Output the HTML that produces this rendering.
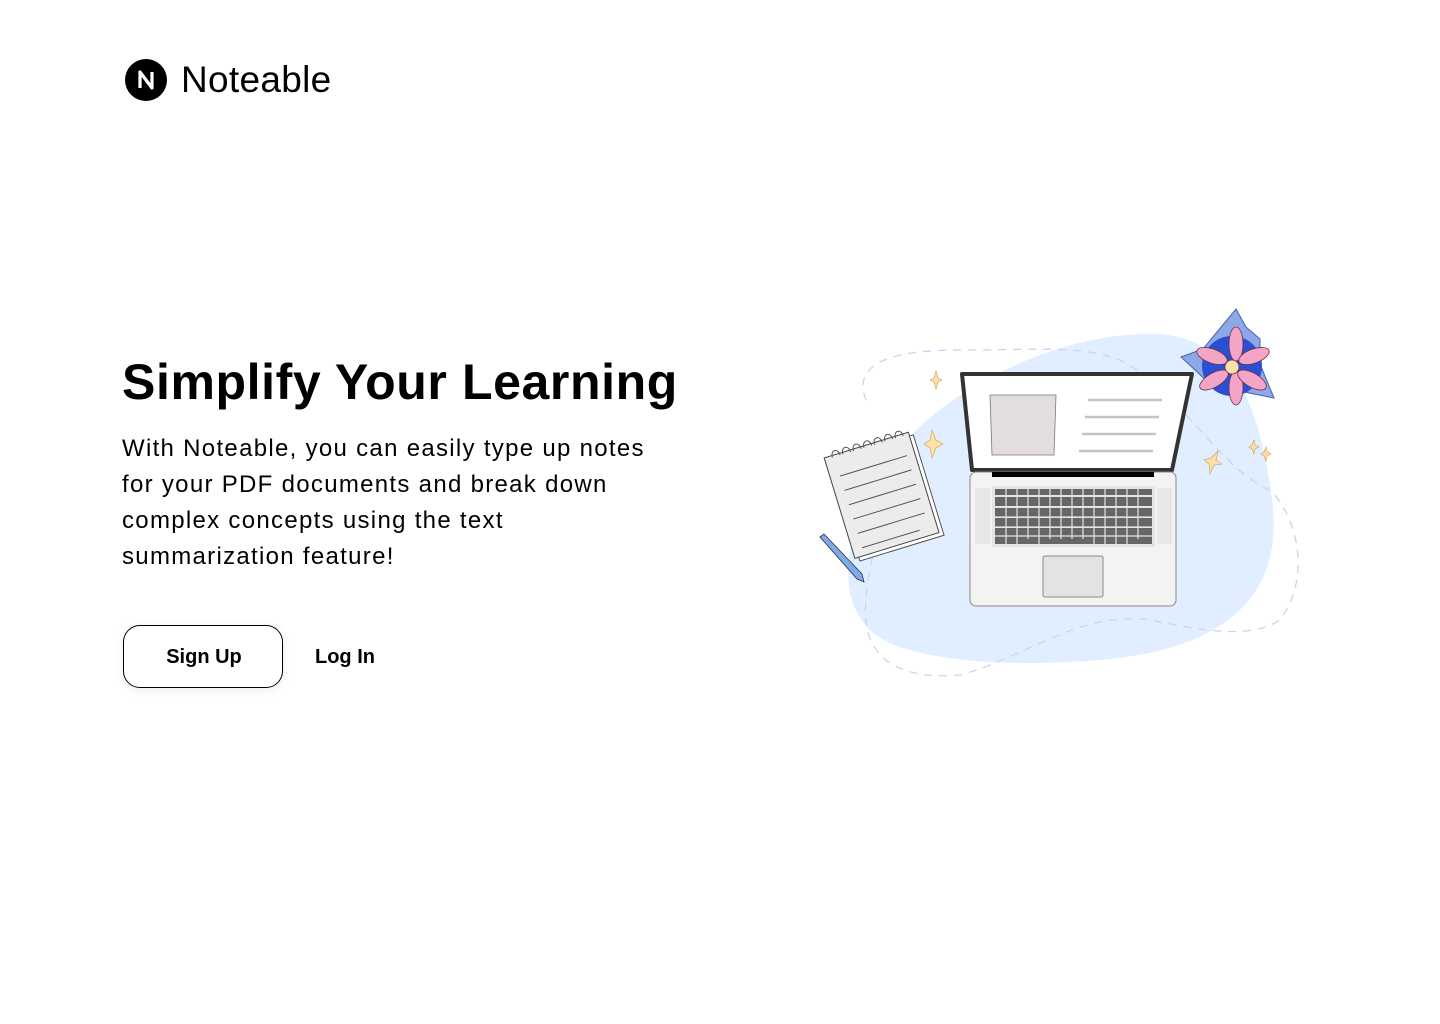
<!DOCTYPE html>
<html><head><meta charset="utf-8"><style>
html,body{margin:0;padding:0;background:#fff;width:1440px;height:1024px;overflow:hidden;font-family:"Liberation Sans",sans-serif;color:#000}
.logo{position:absolute;left:125px;top:59px;display:flex;align-items:center}
.logo .c{width:42px;height:42px;border-radius:50%;background:#000;position:relative}
.logo span{font-size:37px;margin-left:14px;letter-spacing:0.3px}
h1{position:absolute;left:122px;top:353px;margin:0;font-size:50px;font-weight:bold;letter-spacing:0.6px;white-space:nowrap}
p{position:absolute;left:122px;top:431px;margin:0;font-size:24px;line-height:36px;white-space:nowrap;letter-spacing:1.3px}
.btn{position:absolute;left:123px;top:625px;width:160px;height:63px;border:1px solid #000;border-radius:17px;box-shadow:0 2px 10px rgba(0,0,0,.08);font-weight:bold;font-size:20px;display:flex;align-items:center;justify-content:center;box-sizing:border-box;padding-left:2px;padding-top:2px}
.login{position:absolute;left:315px;top:646px;font-weight:bold;font-size:20px}
svg.il{position:absolute;left:0;top:0}
</style></head><body>
<div class="logo"><div class="c"><svg width="42" height="42" viewBox="0 0 42 42"><path d="M15 29V13l12 16V13" fill="none" stroke="#fff" stroke-width="3.2" stroke-linejoin="round"/></svg></div><span>Noteable</span></div>
<h1>Simplify Your Learning</h1>
<p>With Noteable, you can easily type up notes<br>for your PDF documents and break down<br>complex concepts using the text<br>summarization feature!</p>
<div class="btn">Sign Up</div>
<div class="login">Log In</div>
<svg class="il" width="1440" height="1024" viewBox="0 0 1440 1024">
<path d="M1160 334C1240 340 1262 420 1272 500C1285 600 1220 650 1100 660C1000 668 900 660 870 630C830 590 850 520 890 460C940 390 1060 330 1160 334Z" fill="#e1eeff"/>
<path d="M866 400C850 360 900 350 960 350C1040 350 1080 345 1120 360C1180 390 1220 470 1270 490C1300 520 1310 580 1280 620C1250 640 1200 630 1150 620C1080 610 1020 660 960 675C900 680 860 660 866 600C868 560 880 540 880 520" fill="none" stroke="#c9d4f2" stroke-width="1.3" stroke-dasharray="8 7"/>
<g fill="#fde0a8" stroke="#c8a060" stroke-width=".6">
<path d="M936 371l2 7 4 2-4 2-2 7-2-7-4-2 4-2z"/>
<path d="M932 430l4 10 7 4-7 4-4 10-2-10-6-4 6-4z"/>
<path d="M1218 451l-2 9 6 4-8 1-4 9-1-10-5-4 7-2z"/>
<path d="M1254 440l1 5 4 2-4 2-1 5-2-5-3-2 3-2z"/>
<path d="M1266 447l1 5 4 2-4 2-1 5-2-5-3-2 3-2z"/>
</g>
<path d="M1236 309l10 18 14 12 0 25 14 34-25-5-40-10-28-26 22-8z" fill="#8da8e6" stroke="#4a5fb0" stroke-width="1"/>
<circle cx="1232" cy="366" r="30" fill="#2a4fd0"/>
<g fill="#f4a5c6" stroke="#6a3050" stroke-width=".8">
<ellipse cx="1236" cy="344" rx="7" ry="17"/><ellipse cx="1236" cy="388" rx="7" ry="17"/>
<ellipse cx="1254" cy="356" rx="7" ry="16" transform="rotate(70 1254 356)"/>
<ellipse cx="1252" cy="380" rx="7" ry="16" transform="rotate(-60 1252 380)"/>
<ellipse cx="1212" cy="356" rx="7" ry="16" transform="rotate(-70 1212 356)"/>
<ellipse cx="1214" cy="380" rx="7" ry="16" transform="rotate(60 1214 380)"/>
</g>
<circle cx="1232" cy="367" r="7" fill="#fde0a8" stroke="#6a3050" stroke-width=".8"/>
<g transform="rotate(-17 880 490)">
<rect x="840" y="447" width="88" height="105" fill="#fff" stroke="#555" stroke-width="1"/>
<rect x="836" y="443" width="88" height="105" fill="#ececec" stroke="#444" stroke-width="1"/>
<g stroke="#555" stroke-width="1" fill="none">
<path d="M846 465h70M846 480h70M846 495h70M846 510h70M846 525h70M846 540h60"/>
<path d="M844 445c0-8 8-8 8 0M855 445c0-8 8-8 8 0M866 445c0-8 8-8 8 0M877 445c0-8 8-8 8 0M888 445c0-8 8-8 8 0M899 445c0-8 8-8 8 0M910 445c0-8 8-8 8 0"/>
</g></g>
<path d="M820 537l4-3 38 40 2 8-7-3z" fill="#7fa9ef" stroke="#333" stroke-width=".8"/>
<path d="M962 374h230l-20 96h-200z" fill="#fff" stroke="#333" stroke-width="4" stroke-linejoin="round"/>
<path d="M990 395h66l-2 60h-62z" fill="#e3dddf" stroke="#777" stroke-width=".8"/>
<g stroke="#c4c4c4" stroke-width="2.4"><path d="M1088 400h74M1085 417h74M1082 434h74M1079 451h74"/></g>
<rect x="970" y="472" width="206" height="134" rx="6" fill="#f3f3f2" stroke="#888" stroke-width="1"/>
<rect x="992" y="472" width="162" height="5" fill="#000"/>
<rect x="975" y="488" width="15" height="56" fill="#e8e8e8"/><rect x="1157" y="488" width="15" height="56" fill="#e8e8e8"/>
<rect x="992" y="486" width="163" height="61" fill="#e4e4e4"/>
<g fill="#666">
<rect x="995" y="489" width="157" height="6"/>
<rect x="995" y="497" width="157" height="9"/>
<rect x="995" y="508" width="157" height="9"/>
<rect x="995" y="518" width="157" height="9"/>
<rect x="995" y="528" width="157" height="9"/>
<rect x="995" y="536" width="157" height="8"/>
</g>
<g stroke="#e4e4e4" stroke-width="1.2"><path d="M1006 489v58M1017 489v58M1028 489v50M1039 489v58M1050 489v50M1061 489v50M1072 489v50M1083 489v50M1094 489v58M1105 489v58M1116 489v58M1127 489v58M1138 489v50M995 496h157M995 507h157M995 517h157M995 527h157M995 536h157"/></g>
<rect x="1043" y="556" width="60" height="41" rx="2" fill="#e3e3e3" stroke="#888" stroke-width="1"/>
</svg>
</body></html>
